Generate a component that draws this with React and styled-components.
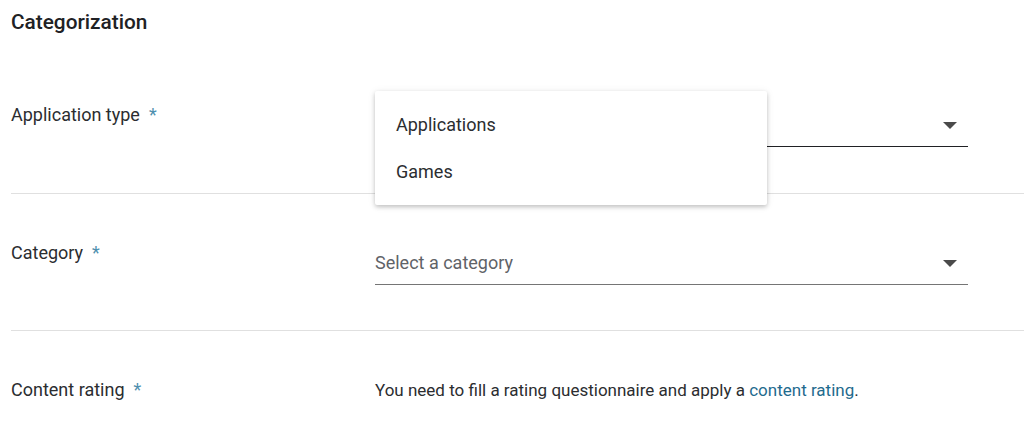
import styled, { createGlobalStyle } from "styled-components";

const GlobalStyle = createGlobalStyle`
  body {
    margin: 0;
    background: #fff;
    font-family: Roboto, "Liberation Sans", Arial, sans-serif;
    color: #202124;
  }
`;

const Page = styled.div`
  padding-left: 11px;
  width: 1013px;
`;

const Title = styled.h2`
  margin: 0;
  padding-top: 10px;
  margin-bottom: 22px;
  font-size: 20.8px;
  line-height: 24px;
  font-weight: 500;
  color: #202124;
`;

const Row = styled.div`
  display: grid;
  grid-template-columns: 364px 593px;
  padding-top: 47px;
  height: ${(p) => p.$height}px;
  box-sizing: border-box;
  border-bottom: ${(p) => (p.$last ? "none" : "1px solid #e0e0e0")};
`;

const Label = styled.div`
  font-size: 18px;
  line-height: 24px;
  color: #2b2d30;
`;

const Star = styled.span`
  color: #4f8fae;
  margin-left: 9px;
`;

const Field = styled.div`
  position: relative;
`;

const Select = styled.div`
  height: 44px;
  box-sizing: border-box;
  display: flex;
  align-items: center;
  justify-content: space-between;
  border-bottom: 1px solid ${(p) => (p.$active ? "#202124" : "#757575")};
  font-size: 18px;
  color: #5f6368;
`;

const Arrow = styled.span`
  width: 0;
  height: 0;
  margin-right: 11px;
  margin-top: 2px;
  border-left: 7px solid transparent;
  border-right: 7px solid transparent;
  border-top: 7px solid #4a4a4a;
`;

const Menu = styled.div`
  position: absolute;
  top: -12px;
  left: 0;
  width: 392px;
  padding: 10px 0;
  background: #fff;
  border-radius: 2px;
  box-shadow: 0 2px 4px rgba(0, 0, 0, 0.2), 0 1px 8px rgba(0, 0, 0, 0.08);
  z-index: 2;
`;

const MenuItem = styled.div`
  height: 47px;
  line-height: 47px;
  padding-left: 21px;
  font-size: 18px;
  color: #2b2d30;
`;

const Text = styled.div`
  font-size: 17px;
  line-height: 24px;
  color: #2b2d30;
`;

const Link = styled.a`
  color: #1f6b8e;
  text-decoration: none;
`;

export default function App() {
  return (
    <Page>
      <GlobalStyle />
      <Title>Categorization</Title>
      <Row $height={138}>
        <Label>
          Application type<Star>*</Star>
        </Label>
        <Field>
          <Select $active>
            <span />
            <Arrow />
          </Select>
          <Menu>
            <MenuItem>Applications</MenuItem>
            <MenuItem>Games</MenuItem>
          </Menu>
        </Field>
      </Row>
      <Row $height={137}>
        <Label>
          Category<Star>*</Star>
        </Label>
        <Field>
          <Select>
            <span>Select a category</span>
            <Arrow />
          </Select>
        </Field>
      </Row>
      <Row $height={110} $last>
        <Label>
          Content rating<Star>*</Star>
        </Label>
        <Text>
          You need to fill a rating questionnaire and apply a{" "}
          <Link href="#">content rating</Link>.
        </Text>
      </Row>
    </Page>
  );
}
